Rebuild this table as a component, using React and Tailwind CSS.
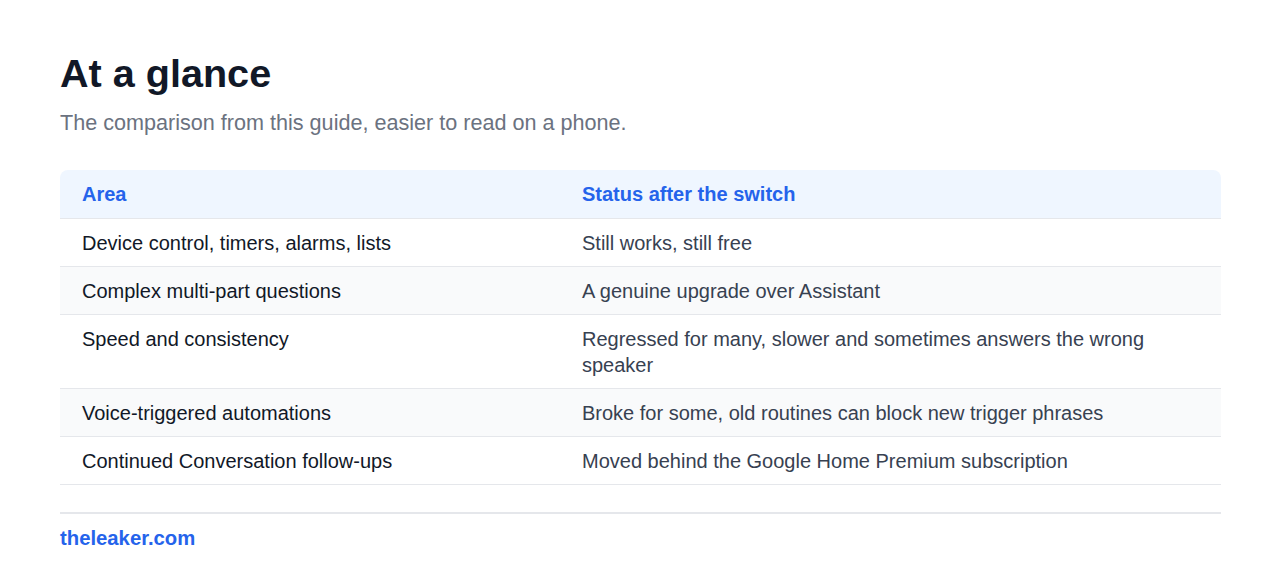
import React from "react";

const rows = [
  ["Device control, timers, alarms, lists", "Still works, still free"],
  ["Complex multi-part questions", "A genuine upgrade over Assistant"],
  ["Speed and consistency", "Regressed for many, slower and sometimes answers the wrong speaker"],
  ["Voice-triggered automations", "Broke for some, old routines can block new trigger phrases"],
  ["Continued Conversation follow-ups", "Moved behind the Google Home Premium subscription"],
];

export default function App() {
  return (
    <div className="min-h-[574px] bg-white px-[60px] pt-[48px] font-['Liberation_Sans',Arial,sans-serif]">
      <h1 className="text-[39.6px] font-bold leading-[50px] text-[#111827]">At a glance</h1>
      <p className="mt-[13px] text-[21.6px] leading-[24px] text-[#6b7280]">
        The comparison from this guide, easier to read on a phone.
      </p>

      <div className="mt-[35px] w-[1161px]">
        <div className="grid grid-cols-[500px_1fr] rounded-t-lg border-b border-[#e5e7eb] bg-[#eff6ff] text-[20px] font-bold leading-[26px] text-[#2563eb]">
          <div className="px-[22px] py-[11px]">Area</div>
          <div className="px-[22px] py-[11px]">Status after the switch</div>
        </div>
        {rows.map(([area, status], i) => (
          <div
            key={area}
            className={`grid grid-cols-[500px_1fr] border-b border-[#e5e7eb] text-[20px] leading-[26px] ${
              i % 2 === 1 ? "bg-[#f9fafb]" : "bg-white"
            }`}
          >
            <div className="px-[22px] py-[10.5px] text-[#111827]">{area}</div>
            <div className="px-[22px] py-[10.5px] text-[#374151]">{status}</div>
          </div>
        ))}
      </div>

      <div className="mt-[27px] w-[1161px] border-t-2 border-[#e5e7eb] pt-[12px]">
        <span className="text-[20.3px] font-bold leading-[24px] text-[#2563eb]">theleaker.com</span>
      </div>
    </div>
  );
}
